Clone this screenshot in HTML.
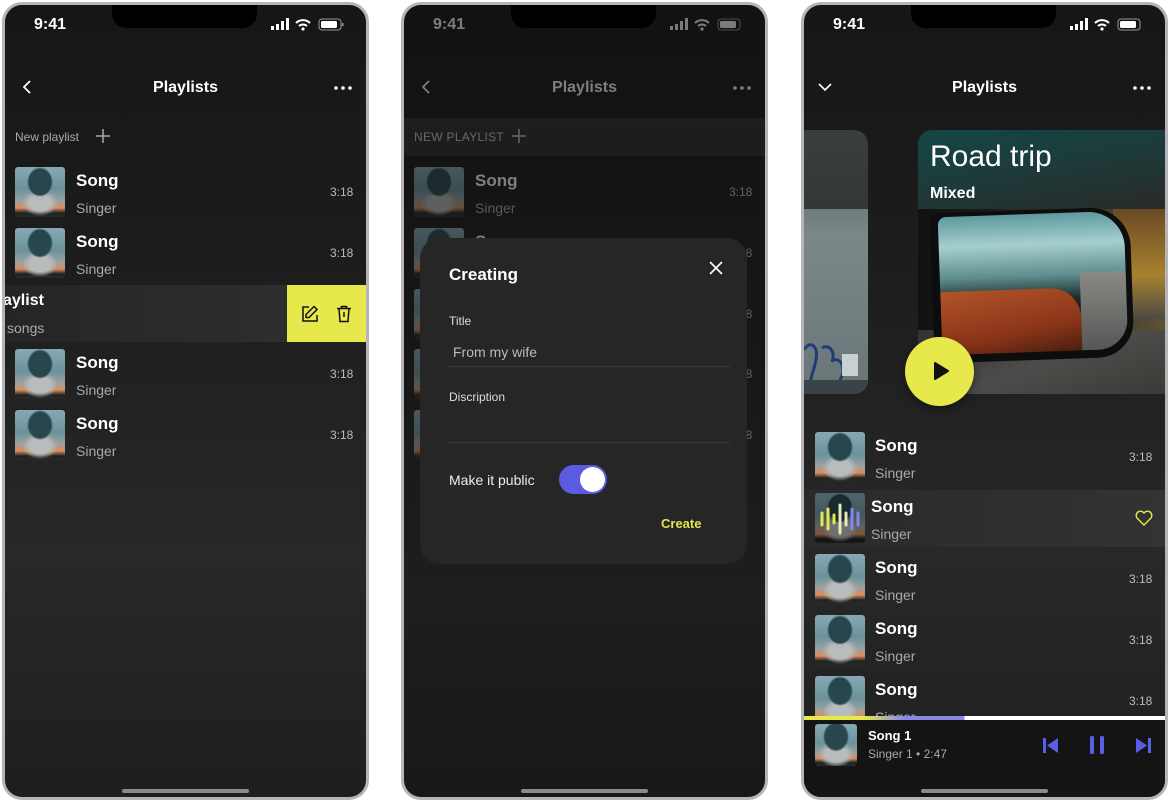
<!DOCTYPE html>
<html><head><meta charset="utf-8"><style>
*{margin:0;padding:0;box-sizing:border-box}
body{width:1170px;height:801px;background:#fff;position:relative;overflow:hidden;font-family:"Liberation Sans",sans-serif;color:#fff}
.ph{position:absolute;top:2px;width:367px;height:798px;border:3px solid #b5b5b7;border-radius:20px;overflow:hidden;background:linear-gradient(#161616 0%,#1c1c1c 30%,#282828 70%,#1e1e1e 100%)}
.a{position:absolute}
.notch{position:absolute;left:107px;top:-5px;width:145px;height:28px;background:#000;border-radius:0 0 14px 14px}
.time{position:absolute;left:29px;top:11px;font-size:16px;font-weight:bold}
.title{position:absolute;left:0;width:361px;top:74px;text-align:center;font-size:16px;font-weight:bold}
.home{position:absolute;left:117px;bottom:4px;width:127px;height:4px;border-radius:2px;background:#8a8a8a}
.th{position:absolute;width:50px;height:50px;border-radius:3px;background:
radial-gradient(ellipse 13px 15px at 50% 30%,#28464d 85%,transparent 100%),
radial-gradient(ellipse 18px 13px at 50% 72%,#b8bcbc 60%,transparent 100%),
linear-gradient(#86aab4 0%,#6b929c 45%,#9aa2a0 68%,#d98c5c 82%,#1d2322 92%,#2a2a2a 100%)}
.sn{position:absolute;font-size:17px;font-weight:bold}
.sg{position:absolute;font-size:14px;color:#a9a9a9}
.tm{position:absolute;font-size:12px;color:#bcbcbc}
.dots{position:absolute;left:329px;top:81px}
</style></head><body>

<!-- PHONE 1 -->
<div class="ph" style="left:2px">
<div class="notch"></div>
<div class="time">9:41</div>
<svg class="a" style="left:266px;top:13px" width="76" height="14" viewBox="0 0 76 14"><rect x="0" y="8" width="3" height="4" fill="#fff"/><rect x="5" y="6" width="3" height="6" fill="#fff"/><rect x="10" y="3" width="3" height="9" fill="#fff"/><rect x="15" y="0" width="3" height="12" fill="#fff"/><path d="M25 5a10 10 0 0 1 14 0M28 8a6 6 0 0 1 8 0" stroke="#fff" stroke-width="2" fill="none"/><circle cx="32" cy="11" r="1.6" fill="#fff"/><rect x="48" y="1" width="22" height="11" rx="3" stroke="#999" fill="none"/><rect x="50" y="3" width="16" height="7" rx="1.5" fill="#fff"/><rect x="71" y="5" width="1.5" height="3" fill="#999"/></svg>
<svg class="a" style="left:16px;top:74px" width="12" height="16"><path d="M9 2L3 8l6 6" stroke="#fff" stroke-width="1.8" fill="none"/></svg>
<div class="title">Playlists</div>
<svg class="dots" width="20" height="4"><circle cx="2" cy="2" r="1.8" fill="#fff"/><circle cx="9" cy="2" r="1.8" fill="#fff"/><circle cx="16" cy="2" r="1.8" fill="#fff"/></svg>
<div class="a" style="left:10px;top:125px;font-size:12px;color:#aaa">New playlist</div>
<svg class="a" style="left:91px;top:124px" width="14" height="14"><path d="M7 0v14M0 7h14" stroke="#aaa" stroke-width="1.5"/></svg>

<div class="th" style="left:10px;top:162px"></div><div class="sn" style="left:71px;top:166px">Song</div><div class="sg" style="left:71px;top:195px">Singer</div><div class="tm" style="left:325px;top:180px">3:18</div>
<div class="th" style="left:10px;top:223px"></div><div class="sn" style="left:71px;top:227px">Song</div><div class="sg" style="left:71px;top:256px">Singer</div><div class="tm" style="left:325px;top:241px">3:18</div>
<div class="a" style="left:0;top:280px;width:282px;height:57px;background:linear-gradient(90deg,#252525,#2e2e2e)"></div>
<div class="sn" style="left:-2px;top:287px;font-size:16px">aylist</div><div class="sg" style="left:2px;top:315px;color:#aaa">songs</div>
<div class="a" style="left:282px;top:280px;width:80px;height:57px;background:#e6e84c"></div>
<svg class="a" style="left:296px;top:300px" width="18" height="18" viewBox="0 0 18 18"><path d="M8 2H2v14h14v-6" stroke="#111" stroke-width="1.5" fill="none"/><path d="M13 1.5l3 3L8 12.5H5v-3z" stroke="#111" stroke-width="1.5" fill="none"/></svg>
<svg class="a" style="left:331px;top:300px" width="16" height="18" viewBox="0 0 16 18"><path d="M1 3.5h14M5.5 3.5V1.5h5v2M3 3.5l1 13h8l1-13M8 7v5" stroke="#111" stroke-width="1.5" fill="none"/></svg>
<div class="th" style="left:10px;top:344px"></div><div class="sn" style="left:71px;top:348px">Song</div><div class="sg" style="left:71px;top:377px">Singer</div><div class="tm" style="left:325px;top:362px">3:18</div>
<div class="th" style="left:10px;top:405px"></div><div class="sn" style="left:71px;top:409px">Song</div><div class="sg" style="left:71px;top:438px">Singer</div><div class="tm" style="left:325px;top:423px">3:18</div>
<div class="home"></div>
</div>

<!-- PHONE 2 -->
<div class="ph" style="left:401px;background:linear-gradient(#121212 0%,#161616 40%,#1e1e1e 75%,#181818 100%)">
<div style="opacity:.45">
<div class="time">9:41</div>
<svg class="a" style="left:266px;top:13px" width="76" height="14" viewBox="0 0 76 14"><rect x="0" y="8" width="3" height="4" fill="#fff"/><rect x="5" y="6" width="3" height="6" fill="#fff"/><rect x="10" y="3" width="3" height="9" fill="#fff"/><rect x="15" y="0" width="3" height="12" fill="#fff"/><path d="M25 5a10 10 0 0 1 14 0M28 8a6 6 0 0 1 8 0" stroke="#fff" stroke-width="2" fill="none"/><circle cx="32" cy="11" r="1.6" fill="#fff"/><rect x="48" y="1" width="22" height="11" rx="3" stroke="#999" fill="none"/><rect x="50" y="3" width="16" height="7" rx="1.5" fill="#fff"/></svg>
<svg class="a" style="left:16px;top:74px" width="12" height="16"><path d="M9 2L3 8l6 6" stroke="#fff" stroke-width="1.8" fill="none"/></svg>
<div class="title">Playlists</div>
<svg class="dots" width="20" height="4"><circle cx="2" cy="2" r="1.8" fill="#fff"/><circle cx="9" cy="2" r="1.8" fill="#fff"/><circle cx="16" cy="2" r="1.8" fill="#fff"/></svg>
<div class="a" style="left:0;top:113px;width:362px;height:38px;background:#2a2a2a"></div>
<div class="a" style="left:10px;top:125px;font-size:12px;color:#ccc;letter-spacing:.3px">NEW PLAYLIST</div>
<svg class="a" style="left:108px;top:124px" width="14" height="14"><path d="M7 0v14M0 7h14" stroke="#ccc" stroke-width="1.5"/></svg>
<div class="th" style="left:10px;top:162px"></div><div class="sn" style="left:71px;top:166px">Song</div><div class="sg" style="left:71px;top:195px">Singer</div><div class="tm" style="left:325px;top:180px">3:18</div>
<div class="th" style="left:10px;top:223px"></div><div class="sn" style="left:71px;top:227px">Song</div><div class="tm" style="left:325px;top:241px">3:18</div>
<div class="th" style="left:10px;top:284px"></div><div class="tm" style="left:325px;top:302px">3:18</div>
<div class="th" style="left:10px;top:344px"></div><div class="tm" style="left:325px;top:362px">3:18</div>
<div class="th" style="left:10px;top:405px"></div><div class="tm" style="left:325px;top:423px">3:18</div>
</div>
<div class="notch"></div>
<div class="a" style="left:16px;top:233px;width:327px;height:326px;background:#262626;border-radius:20px"></div>
<div class="a" style="left:45px;top:260px;font-size:17px;font-weight:bold">Creating</div>
<svg class="a" style="left:304px;top:255px" width="16" height="16"><path d="M2 2l12 12M14 2L2 14" stroke="#fff" stroke-width="1.6"/></svg>
<div class="a" style="left:45px;top:309px;font-size:12px;color:#ddd">Title</div>
<div class="a" style="left:49px;top:339px;font-size:14px;color:#bbb">From my wife</div>
<div class="a" style="left:45px;top:361px;width:281px;height:1px;background:#3a3a3a"></div>
<div class="a" style="left:45px;top:385px;font-size:12px;color:#ddd">Discription</div>
<div class="a" style="left:45px;top:437px;width:281px;height:1px;background:#3a3a3a"></div>
<div class="a" style="left:45px;top:467px;font-size:14px;color:#eee">Make it public</div>
<div class="a" style="left:155px;top:460px;width:48px;height:29px;border-radius:15px;background:#5a5be0"></div>
<div class="a" style="left:176px;top:462px;width:25px;height:25px;border-radius:50%;background:#fff"></div>
<div class="a" style="left:257px;top:511px;font-size:13px;font-weight:bold;color:#e3e549">Create</div>
<div class="home"></div>
</div>

<!-- PHONE 3 -->
<div class="ph" style="left:801px">
<div class="notch"></div>
<div class="time">9:41</div>
<svg class="a" style="left:266px;top:13px" width="76" height="14" viewBox="0 0 76 14"><rect x="0" y="8" width="3" height="4" fill="#fff"/><rect x="5" y="6" width="3" height="6" fill="#fff"/><rect x="10" y="3" width="3" height="9" fill="#fff"/><rect x="15" y="0" width="3" height="12" fill="#fff"/><path d="M25 5a10 10 0 0 1 14 0M28 8a6 6 0 0 1 8 0" stroke="#fff" stroke-width="2" fill="none"/><circle cx="32" cy="11" r="1.6" fill="#fff"/><rect x="48" y="1" width="22" height="11" rx="3" stroke="#999" fill="none"/><rect x="50" y="3" width="16" height="7" rx="1.5" fill="#fff"/></svg>
<svg class="a" style="left:13px;top:76px" width="16" height="12"><path d="M2 3l6 6 6-6" stroke="#fff" stroke-width="1.6" fill="none"/></svg>
<div class="title">Playlists</div>
<svg class="dots" width="20" height="4"><circle cx="2" cy="2" r="1.8" fill="#fff"/><circle cx="9" cy="2" r="1.8" fill="#fff"/><circle cx="16" cy="2" r="1.8" fill="#fff"/></svg>
<!-- left card -->
<div class="a" style="left:-10px;top:125px;width:74px;height:264px;border-radius:14px;overflow:hidden;background:linear-gradient(#3b3e3e 0,#343737 79px,#6f7a7c 79px,#7c8789 40%,#6a7577 100%)">
<svg class="a" style="left:0;top:180px" width="74" height="84"><path d="M10 40c5-10 15-5 12 10s-8 20-4 30M28 38c6-4 14 2 10 14M40 50c8-2 12 10 6 20" stroke="#1f3c78" stroke-width="3" fill="none"/><rect x="48" y="44" width="16" height="22" fill="#c9d0d2"/><rect x="0" y="70" width="74" height="14" fill="#3a4448"/></svg>
</div>
<!-- right card -->
<div class="a" style="left:114px;top:125px;width:260px;height:264px;border-radius:14px 0 0 14px;overflow:hidden;background:#1b1c1c">
<div class="a" style="left:0;top:0;width:260px;height:79px;background:linear-gradient(170deg,#134646 0%,#1b3d3c 40%,#2a2a28 100%)"></div>
<div class="a" style="left:0;top:79px;width:260px;height:185px;background:linear-gradient(90deg,#111 0%,#1d1d1b 30%,#3b3a36 70%,#6a5530 100%)"></div>
<div class="a" style="left:195px;top:79px;width:65px;height:110px;background:linear-gradient(#6b4a24,#a7812f 60%,#4c4a44)"></div>
<div class="a" style="left:0;top:200px;width:260px;height:64px;background:linear-gradient(160deg,#333 0%,#4d4c4a 50%,#3a3936 100%)"></div>
<div class="a" style="left:14px;top:80px;width:200px;height:150px;border-radius:10px 40px 36px 14px;background:#0d0d0d;transform:rotate(-2deg)"></div>
<div class="a" style="left:22px;top:84px;width:186px;height:138px;border-radius:8px 36px 30px 12px;overflow:hidden;transform:rotate(-2deg);background:linear-gradient(180deg,#5e9a9e 0%,#a6cfcf 22%,#5d8d8c 45%,#1f2825 62%,#1a1a1a 100%)">
<div class="a" style="left:0;top:75px;width:140px;height:70px;background:linear-gradient(170deg,#b2542a,#8a3418 60%,#3a1a10);border-radius:0 30px 0 0"></div>
<div class="a" style="left:140px;top:60px;width:46px;height:80px;background:linear-gradient(#8a8a84,#555)"></div>
</div>
<div class="a" style="left:12px;top:10px;font-size:30px">Road trip</div>
<div class="a" style="left:12px;top:55px;font-size:16px;font-weight:bold">Mixed</div>
</div>
<div class="a" style="left:101px;top:332px;width:69px;height:69px;border-radius:50%;background:#e6e84c;box-shadow:0 4px 10px rgba(0,0,0,.4)"></div>
<svg class="a" style="left:128px;top:356px" width="18" height="20"><path d="M3 2L16 10 3 18z" fill="#111" stroke="#111" stroke-width="2" stroke-linejoin="round"/></svg>

<div class="th" style="left:11px;top:427px"></div><div class="sn" style="left:71px;top:431px">Song</div><div class="sg" style="left:71px;top:460px">Singer</div><div class="tm" style="left:325px;top:445px">3:18</div>
<div class="a" style="left:0;top:485px;width:362px;height:57px;background:linear-gradient(90deg,#2a2a2a,#333)"></div>
<div class="th" style="left:11px;top:488px;filter:brightness(.6)"></div>
<svg class="a" style="left:15px;top:496px" width="44" height="36"><g stroke-width="3" stroke-linecap="round"><path d="M3 12v12M9 8v20M15 14v8" stroke="#e6e84c"/><path d="M21 4v28M27 12v12" stroke="#e8e8c0"/><path d="M33 8v20M39 12v12" stroke="#8a86e8"/></g></svg>
<div class="sn" style="left:67px;top:492px">Song</div><div class="sg" style="left:67px;top:521px">Singer</div>
<svg class="a" style="left:331px;top:505px" width="18" height="16"><path d="M9 15L2 8a4 4 0 0 1 7-5 4 4 0 0 1 7 5z" stroke="#e6e84c" stroke-width="1.4" fill="none"/></svg>
<div class="th" style="left:11px;top:549px"></div><div class="sn" style="left:71px;top:553px">Song</div><div class="sg" style="left:71px;top:582px">Singer</div><div class="tm" style="left:325px;top:567px">3:18</div>
<div class="th" style="left:11px;top:610px"></div><div class="sn" style="left:71px;top:614px">Song</div><div class="sg" style="left:71px;top:643px">Singer</div><div class="tm" style="left:325px;top:628px">3:18</div>
<div class="th" style="left:11px;top:671px"></div><div class="sn" style="left:71px;top:675px">Song</div><div class="sg" style="left:71px;top:704px">Singer</div><div class="tm" style="left:325px;top:689px">3:18</div>
<div class="a" style="left:0;top:711px;width:362px;height:4px;background:linear-gradient(90deg,#e6e84c 0,#e6e84c 60px,#8a86e8 100px,#8a86e8 160px,#fff 161px)"></div>
<div class="a" style="left:0;top:715px;width:362px;height:90px;background:#141414"></div>
<div class="th" style="left:11px;top:719px;width:42px;height:42px"></div>
<div class="a" style="left:64px;top:723px;font-size:13px;font-weight:bold">Song 1</div>
<div class="a" style="left:64px;top:742px;font-size:12px;color:#aaa">Singer 1 • 2:47</div>
<svg class="a" style="left:239px;top:733px" width="16" height="15"><rect x="0" y="0" width="3" height="15" fill="#5b5ce8"/><path d="M15 0v15L4 7.5z" fill="#5b5ce8"/></svg>
<svg class="a" style="left:286px;top:731px" width="14" height="18"><rect x="0" y="0" width="4" height="18" rx="1.5" fill="#5b5ce8"/><rect x="10" y="0" width="4" height="18" rx="1.5" fill="#5b5ce8"/></svg>
<svg class="a" style="left:331px;top:733px" width="16" height="15"><path d="M1 0v15L12 7.5z" fill="#5b5ce8"/><rect x="13" y="0" width="3" height="15" fill="#5b5ce8"/></svg>
<div class="home"></div>
</div>
</body></html>
